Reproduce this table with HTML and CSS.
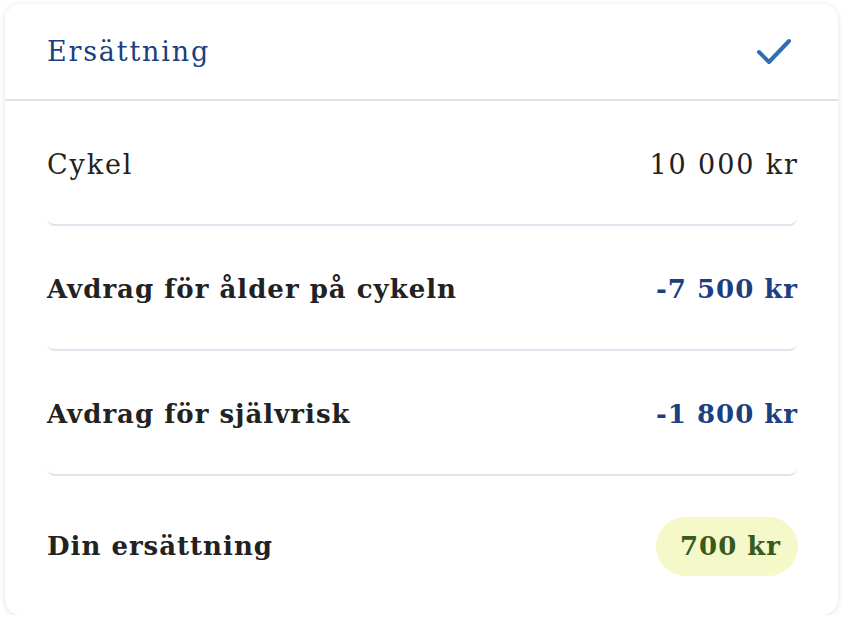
FILE: index.html
```html
<!DOCTYPE html>
<html lang="sv">
<head>
    <meta charset="UTF-8">
    <meta name="viewport" content="width=device-width, initial-scale=1.0">
    <title>Ersättning</title>
    <link rel="stylesheet" href="styles.css">
</head>
<body>
    <main class="card">
        <header class="card-header">
            <h2>Ersättning</h2>
            <svg class="check" width="40" height="30" viewBox="0 0 40 30" aria-hidden="true">
                <path d="M5 14 L15 24 L35 3" fill="none" stroke="#2f6db5" stroke-width="4" stroke-linecap="round" stroke-linejoin="round"/>
            </svg>
        </header>

        <section class="rows">
            <div class="row">
                <span class="label">Cykel</span>
                <span class="amount">10 000 kr</span>
            </div>
            <div class="row strong">
                <span class="label">Avdrag för ålder på cykeln</span>
                <span class="amount minus">-7 500 kr</span>
            </div>
            <div class="row strong">
                <span class="label">Avdrag för självrisk</span>
                <span class="amount minus">-1 800 kr</span>
            </div>
            <div class="row strong total">
                <span class="label">Din ersättning</span>
                <span class="amount pill">700 kr</span>
            </div>
        </section>
    </main>
</body>
</html>
```

FILE: styles.css
```css
html, body {
    margin: 0;
    padding: 0;
    background: #fff;
    font-family: "DejaVu Serif", "Liberation Serif", serif;
    color: #222;
}
body {
    padding: 4px 6px 0 5px;
}
.card {
    height: 611px;
    box-sizing: border-box;
    background: #fff;
    border-radius: 16px;
    box-shadow: 0 1px 6px rgba(0, 0, 0, 0.12);
    display: flex;
    flex-direction: column;
}
.card-header {
    height: 97px;
    box-sizing: border-box;
    border-bottom: 2px solid #dde3ee;
    padding: 0 44px 0 42px;
    display: flex;
    align-items: center;
    justify-content: space-between;
}
.card-header h2 {
    margin: 0;
    font-size: 27px;
    font-weight: normal;
    letter-spacing: 1.8px;
    color: #1b3f80;
}
.check {
    display: block;
    margin-top: 2px;
}
.rows {
    flex: 1;
    padding: 0 41px 0 42px;
    display: flex;
    flex-direction: column;
}
.row {
    height: 125px;
    box-sizing: border-box;
    padding-top: 3px;
    border-bottom: 2px solid #dfe4ee;
    border-radius: 0 0 8px 8px;
    display: flex;
    align-items: center;
    justify-content: space-between;
    font-size: 27px;
    letter-spacing: 1.9px;
}
.row .amount {
    margin-right: -1.9px;
}
.row.strong {
    font-size: 26px;
    font-weight: bold;
    letter-spacing: 1px;
}
.row.strong .amount {
    margin-right: -1px;
}
.row.total {
    flex: 1;
    border-bottom: none;
    padding-bottom: 2px;
}
.minus {
    color: #1b3f80;
}
.row .pill {
    background: #f5f8c8;
    color: #375a1f;
    line-height: 33px;
    padding: 13px 17px 13px 24px;
    margin-right: 0;
    border-radius: 30px;
}
```
